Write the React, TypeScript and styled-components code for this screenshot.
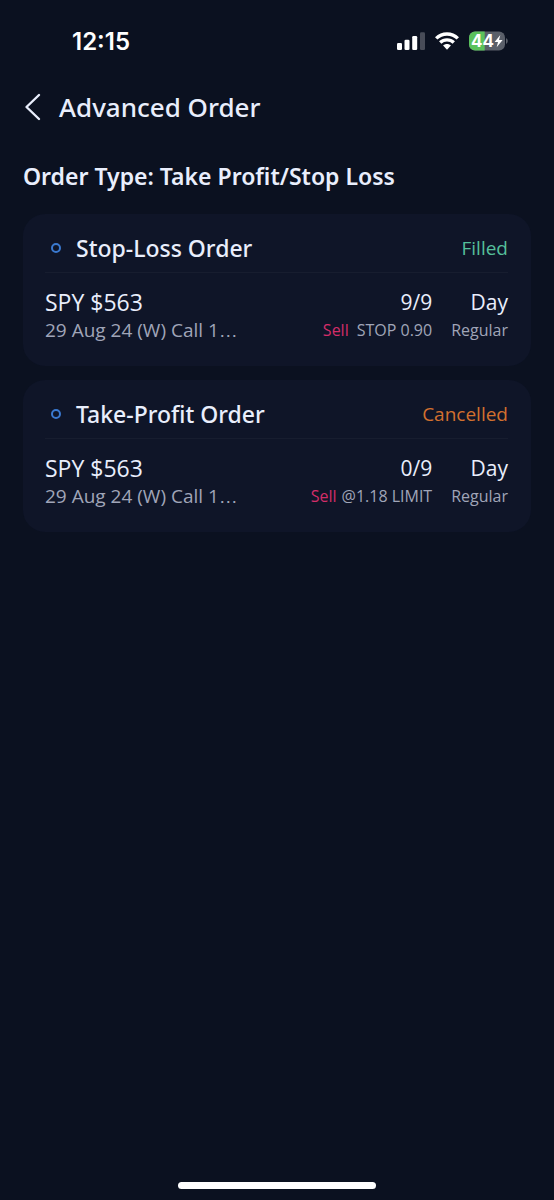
import React from 'react';
import styled, { createGlobalStyle } from 'styled-components';

const GlobalStyle = createGlobalStyle`
  *, *::before, *::after { box-sizing: border-box; }
  body {
    margin: 0;
    background: #0b1120;
    color: #e9eefc;
    font-family: 'Open Sans', 'Noto Sans', sans-serif;
  }
  h1, h2, h3 {
    margin: 0;
    font-family: 'Noto Sans', 'Open Sans', sans-serif;
  }
  p { margin: 0; }
`;

const Screen = styled.div`
  display: flex;
  flex-direction: column;
  min-height: 100vh;
`;

const StatusBar = styled.div`
  display: flex;
  align-items: center;
  justify-content: space-between;
  height: 82px;
  padding: 0 46px 0 72px;
`;

const Clock = styled.time`
  padding-top: 2px;
  color: #ffffff;
  font: 600 24px/28px Inter, sans-serif;
`;

const StatusIcons = styled.div`
  display: flex;
  align-items: center;
  gap: 10px;
`;

const Header = styled.header`
  display: flex;
  align-items: center;
  gap: 18px;
  height: 50px;
  padding: 0 24px;
`;

const BackButton = styled.button`
  display: flex;
  padding: 0;
  border: 0;
  background: none;
  color: inherit;
  cursor: pointer;
`;

const PageTitle = styled.h1`
  font-size: 26px;
  font-weight: 500;
  line-height: 36px;
`;

const Content = styled.main`
  flex: 1;
  display: flex;
  flex-direction: column;
  padding: 28px 23px;
`;

const OrderType = styled.h2`
  margin-bottom: 22px;
  font-size: 23px;
  font-weight: 600;
  line-height: 32px;
`;

const OrderList = styled.div`
  display: flex;
  flex-direction: column;
  gap: 14px;
`;

const Card = styled.section`
  padding: 10px 23px 23px 22px;
  border-radius: 22px;
  background: #0f1528;
`;

const CardHeader = styled.div`
  display: flex;
  align-items: center;
  height: 49px;
  border-bottom: 1px solid #171d2f;
`;

const Marker = styled.span`
  width: 10px;
  height: 10px;
  margin: 0 15px 0 6px;
  border: 2px solid #3a79d0;
  border-radius: 50%;
`;

const CardTitle = styled.h3`
  flex: 1;
  font-size: 23px;
  font-weight: 500;
  line-height: 32px;
`;

const Status = styled.span<{ $tone: 'filled' | 'cancelled' }>`
  color: ${({ $tone }) => ($tone === 'filled' ? '#55bf9a' : '#d2702f')};
  font-size: 19px;
  line-height: 28px;
`;

const Details = styled.div`
  display: flex;
  gap: 19px;
  padding-top: 14px;
`;

const Column = styled.div<{ $grow?: boolean }>`
  flex: ${({ $grow }) => ($grow ? '1' : 'none')};
  min-width: 0;
  text-align: ${({ $grow }) => ($grow ? 'left' : 'right')};
  white-space: nowrap;
`;

const Primary = styled.p<{ $large?: boolean }>`
  font-size: ${({ $large }) => ($large ? '23px' : '21px')};
  line-height: 30px;
`;

const Secondary = styled.p<{ $large?: boolean }>`
  color: #a0a5b8;
  font-size: ${({ $large }) => ($large ? '19px' : '16px')};
  line-height: 26px;
`;

const Ellipsis = styled.span`
  font-family: 'Liberation Sans', sans-serif;
  line-height: 1;
`;

const Side = styled.span<{ $spaced: boolean }>`
  margin-right: ${({ $spaced }) => ($spaced ? '8px' : '5px')};
  color: #d32d68;
`;

const HomeBar = styled.div`
  align-self: center;
  width: 198px;
  height: 7px;
  margin-bottom: 11px;
  border-radius: 4px;
  background: #ffffff;
`;

const BatteryBox = styled.div`
  position: relative;
  display: flex;
  align-items: center;
  justify-content: center;
  width: 39px;
  height: 20px;
  padding-right: 3px;
`;

const BatteryShape = styled.svg`
  position: absolute;
  inset: 0;
`;

const BatteryLevel = styled.span`
  position: relative;
  padding-right: 9px;
  color: #ffffff;
  font: 700 17px/20px Inter, sans-serif;
`;

const Signal = () => (
  <svg width="28" height="18" viewBox="0 0 28 18" aria-hidden="true">
    <g fill="#fff">
      <rect x="0" y="11" width="5" height="7" rx="1.3" />
      <rect x="7.5" y="7.8" width="5" height="10.2" rx="1.3" />
      <rect x="15.2" y="4" width="5" height="14" rx="1.3" />
      <rect x="23" y="0.3" width="5" height="17.7" rx="1.3" opacity="0.25" />
    </g>
  </svg>
);

const Wifi = () => (
  <svg width="24" height="18" viewBox="0 0 24 18" aria-hidden="true">
    <g fill="none" stroke="#fff" strokeWidth="3.4">
      <path d="M1.2 6.4C7.2 0.5 16.8 0.5 22.8 6.4" />
      <path d="M5.2 10.6C9 7 15 7 18.8 10.6" />
    </g>
    <path d="M8.1 13.6C10.3 11.6 13.7 11.6 15.9 13.6L12 17.8Z" fill="#fff" />
  </svg>
);

const Battery = () => (
  <BatteryBox>
    <BatteryShape width="39" height="20" viewBox="0 0 39 20" aria-hidden="true">
      <rect x="0" y="0.5" width="36" height="19" rx="6" fill="#5a5f69" />
      <path d="M6 0.5H15.7V19.5H6A6 6 0 0 1 0 13.5V6.5A6 6 0 0 1 6 0.5Z" fill="#5ac15c" />
      <path d="M37 7A3.4 3.4 0 0 1 37 13Z" fill="#5a5f69" />
      <path d="M31.3 4L25.6 11H29L27.7 16.2L33.6 9H30Z" fill="#fff" />
    </BatteryShape>
    <BatteryLevel>44</BatteryLevel>
  </BatteryBox>
);

interface Order {
  title: string;
  status: string;
  tone: 'filled' | 'cancelled';
  quantity: string;
  price: string;
  spaced: boolean;
}

const orders: Order[] = [
  { title: 'Stop-Loss Order', status: 'Filled', tone: 'filled', quantity: '9/9', price: 'STOP 0.90', spaced: true },
  { title: 'Take-Profit Order', status: 'Cancelled', tone: 'cancelled', quantity: '0/9', price: '@1.18 LIMIT', spaced: false },
];

const OrderCard = ({ order }: { order: Order }) => (
  <Card>
    <CardHeader>
      <Marker />
      <CardTitle>{order.title}</CardTitle>
      <Status $tone={order.tone}>{order.status}</Status>
    </CardHeader>
    <Details>
      <Column $grow>
        <Primary $large>SPY $563</Primary>
        <Secondary $large>
          29 Aug 24 (W) Call 1<Ellipsis>…</Ellipsis>
        </Secondary>
      </Column>
      <Column>
        <Primary>{order.quantity}</Primary>
        <Secondary>
          <Side $spaced={order.spaced}>Sell</Side>
          {order.price}
        </Secondary>
      </Column>
      <Column>
        <Primary>Day</Primary>
        <Secondary>Regular</Secondary>
      </Column>
    </Details>
  </Card>
);

export default function App() {
  return (
    <Screen>
      <GlobalStyle />
      <StatusBar>
        <Clock>12:15</Clock>
        <StatusIcons>
          <Signal />
          <Wifi />
          <Battery />
        </StatusIcons>
      </StatusBar>
      <Header>
        <BackButton type="button" aria-label="Back">
          <svg width="17" height="28" viewBox="0 0 17 28" fill="none" stroke="currentColor" strokeWidth="2.4" strokeLinecap="round" strokeLinejoin="round">
            <path d="M15 2L2.5 14L15 26" />
          </svg>
        </BackButton>
        <PageTitle>Advanced Order</PageTitle>
      </Header>
      <Content>
        <OrderType>Order Type: Take Profit/Stop Loss</OrderType>
        <OrderList>
          {orders.map((order) => (
            <OrderCard key={order.title} order={order} />
          ))}
        </OrderList>
      </Content>
      <HomeBar />
    </Screen>
  );
}
